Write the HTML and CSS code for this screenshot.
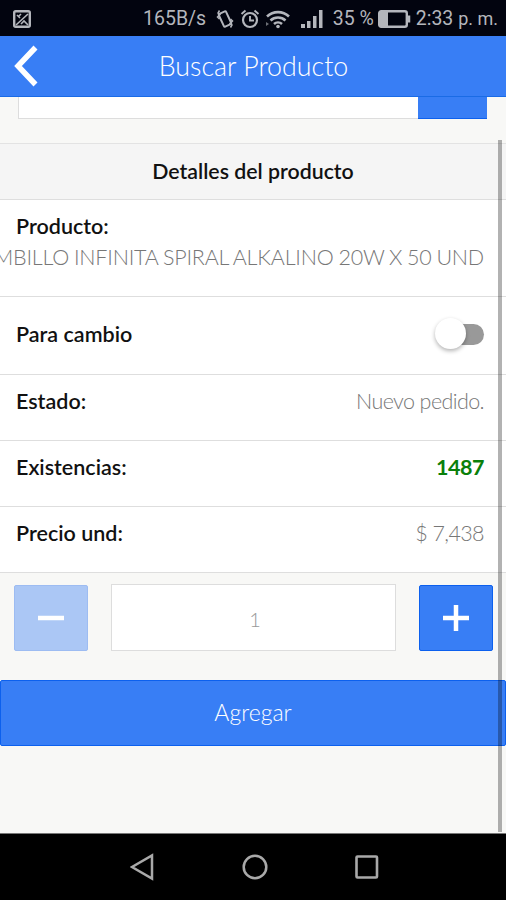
FILE: index.html
```
<!DOCTYPE html>
<html lang="es">

<head>
  <meta charset="UTF-8" />
  <meta name="viewport" content="width=device-width, initial-scale=1.0" />
  <title>Buscar Producto</title>
  <link rel="stylesheet" href="styles.css">
</head>

<body>
  <div class="app">

    <div class="status-bar">
      <svg class="status-image" width="18" height="18" viewBox="0 0 18 18" fill="none" stroke="#b4b6bc" stroke-width="2.400">
        <rect x="1.200" y="1.200" width="15.600" height="15.600" rx="1.500" />
        <path d="M3 15L15 4M8 14l3-3 4 4M4 5l3 3M8 4l-3 3" stroke-width="1.600" />
      </svg>
      <span class="speed">165B/s</span>
      <!-- vibración -->
      <svg class="status-mute" width="18" height="20" viewBox="0 0 18 20" fill="none" stroke="#b4b6bc" stroke-width="2">
        <rect x="5" y="3" width="8" height="14" rx="1" transform="rotate(-25 9 10)" />
        <path d="M3.500 1.500L2 4l2 1.500L1.500 8l2 2M14.500 10l2 2-2.500 2.500 2 1.500-1.500 2.500" stroke-width="1.500" />
      </svg>
      <!-- alarma -->
      <svg class="status-alarm" width="20" height="20" viewBox="0 0 20 20" fill="none" stroke="#b4b6bc" stroke-width="2.200">
        <circle cx="10" cy="11" r="7" />
        <path d="M10 7v4.500h4M1.500 5L5.500 1.500M18.500 5l-4-3.500" stroke-width="1.900" />
      </svg>
      <!-- wifi -->
      <svg class="status-wifi" width="26" height="20" viewBox="0 0 26 20" fill="none" stroke="#b4b6bc" stroke-width="2.600">
        <path d="M2 7.500a16 16 0 0 1 22 0M5.500 11.500a11 11 0 0 1 15 0M9 15a6 6 0 0 1 8 0" />
        <circle cx="13" cy="17.500" r="1.800" fill="#b4b6bc" stroke="none" />
        <path d="M1 13v4l3-2z" fill="#6d7077" stroke="none" />
      </svg>
      <svg class="status-signal" width="22" height="18" viewBox="0 0 22 18" fill="#b4b6bc">
        <path d="M0 14h4v4H0zM6 11h3.500v7H6zM12 6h3.500v12H12zM18 0h3.500v18H18z" />
      </svg>
      <span class="percent">35 %</span>
      <svg class="status-battery" width="33" height="18" viewBox="0 0 33 18" fill="none" stroke="#b4b6bc" stroke-width="2.400">
        <rect x="1.200" y="1.200" width="27.600" height="15.600" rx="2" />
        <path d="M1 1h9v16H1z" fill="#b4b6bc" stroke="none" />
        <path d="M31 5.500v7" stroke-width="2.500" />
      </svg>
      <span class="clock">2:33 <small>p. m.</small></span>
    </div>

    <header class="header">
      <button class="back" aria-label="Volver">
        <svg width="24" height="42" viewBox="0 0 24 42" fill="none" stroke="#fff" stroke-width="5.500">
          <path d="M21.500 2.500L4 21l17.500 18.500" />
        </svg>
      </button>
      <h1>Buscar Producto</h1>
    </header>

    <main class="content">
      <div class="search">
        <div class="search-input"></div>
        <div class="search-btn"></div>
      </div>

      <ul class="details">
        <li class="divider">Detalles del producto</li>
        <li class="item product">
          <b>Producto:</b>
          <span class="value">MBILLO INFINITA SPIRAL ALKALINO 20W X 50 UND</span>
        </li>
        <li class="item change">
          <b>Para cambio</b>
          <div class="toggle">
            <div class="toggle-handle"></div>
          </div>
        </li>
        <li class="item">
          <b>Estado:</b>
          <span class="value status">Nuevo pedido.</span>
        </li>
        <li class="item">
          <b>Existencias:</b>
          <span class="value stock">1487</span>
        </li>
        <li class="item">
          <b>Precio und:</b>
          <span class="value price">$ 7,438</span>
        </li>
      </ul>

      <div class="quantity">
        <button class="minus" aria-label="Restar">
          <svg width="26" height="26" viewBox="0 0 26 26" stroke="#fff" stroke-width="4.500">
            <path d="M0 13h26" />
          </svg>
        </button>
        <div class="amount">1</div>
        <button class="plus" aria-label="Sumar">
          <svg width="26" height="26" viewBox="0 0 26 26" stroke="#fff" stroke-width="4.500">
            <path d="M0 13h26M13 0v26" />
          </svg>
        </button>
      </div>

      <button class="add">Agregar</button>

      <div class="scrollbar"></div>
    </main>

    <nav class="nav-bar">
      <svg width="24" height="28" viewBox="0 0 24 28" fill="none" stroke="#a9a9a9" stroke-width="2.500">
        <path d="M22 2.500v23L2 14z" />
      </svg>
      <svg width="26" height="26" viewBox="0 0 26 26" fill="none" stroke="#a9a9a9" stroke-width="2.500">
        <circle cx="13" cy="13" r="11.300" />
      </svg>
      <svg width="24" height="24" viewBox="0 0 24 24" fill="none" stroke="#a9a9a9" stroke-width="2.600">
        <rect x="1.500" y="1.500" width="20.500" height="21" rx="1" />
      </svg>
    </nav>

  </div>
</body>

</html>
```

FILE: styles.css
```
* {
  box-sizing: border-box;
}

body {
  margin: 0;
  font-family: Lato, "Liberation Sans", sans-serif;
  font-size: 21.5px;
  color: #111;
}

button {
  appearance: none;
  border: none;
  padding: 0;
  font-family: inherit;
  cursor: pointer;
}

svg {
  display: block;
  flex: none;
}

.app {
  display: flex;
  flex-direction: column;
  width: 506px;
  height: 900px;
  overflow: hidden;
}

/* status bar */
.status-bar {
  display: flex;
  align-items: center;
  height: 36px;
  padding: 1px 8px 0 13px;
  background: #02040f;
  color: #b4b6bc;
  font-family: Roboto, sans-serif;
  font-size: 19.5px;
  white-space: nowrap;
}

.speed {
  width: 64px;
  margin-left: 112px;
}

.status-mute {
  margin-left: 9px;
}

.status-alarm {
  margin-left: 6px;
}

.status-wifi {
  margin-left: 5px;
}

.status-signal {
  margin-left: 10px;
}

.percent {
  width: 42px;
  margin-left: 10px;
}

.status-battery {
  margin-left: 3px;
}

.clock {
  margin-left: 5px;
}

.clock small {
  font-size: 18px;
}

/* header */
.header {
  display: grid;
  grid-template-columns: 54px 1fr 53px;
  align-items: center;
  height: 61px;
  background: #387ef5;
  border-bottom: 1px solid #1a6be6;
}

.header h1 {
  margin: 0;
  font-size: 26.8px;
  font-weight: 300;
  text-align: center;
  color: #fff;
}

.back {
  padding-left: 14px;
  background: none;
}

/* content */
.content {
  position: relative;
  flex: 1;
  background: #f8f8f6;
}

.search {
  display: flex;
  height: 22px;
  margin: 0 19px 0 18px;
}

.search-input {
  flex: 1;
  background: #fff;
  border: 1px solid #ddd;
  border-top: none;
  border-right: none;
}

.search-btn {
  width: 69px;
  background: #387ef5;
  border-bottom: 1px solid #0c60ee;
}

.details {
  margin: 24px 0 0;
  padding: 0;
  list-style: none;
}

.divider {
  height: 57px;
  border-top: 1px solid #e3e3e3;
  border-bottom: 1px solid #dedede;
  background: #f5f5f5;
  font-size: 21.3px;
  font-weight: 600;
  line-height: 55px;
  text-align: center;
}

.item {
  display: flex;
  justify-content: space-between;
  height: 66px;
  padding: 11px 22px 0 16px;
  border-bottom: 1px solid #dedede;
  background: #fff;
  line-height: 30px;
  white-space: nowrap;
}

.item b {
  font-weight: 600;
}

.product {
  flex-direction: column;
  justify-content: flex-start;
  height: 97px;
}

.product .value {
  align-self: flex-end;
  letter-spacing: -0.2px;
  line-height: 32px;
  word-spacing: -0.8px;
}

.change {
  height: 78px;
  padding-top: 22px;
}

.value {
  font-weight: 300;
  color: #777;
}

.status {
  letter-spacing: -0.6px;
}

.stock {
  letter-spacing: -0.5px;
  font-weight: 700;
  color: #0a800a;
}

.price {
  letter-spacing: -0.6px;
}

.toggle {
  width: 48px;
  height: 21px;
  margin-top: 5px;
  border-radius: 11px;
  background: #999;
}

.toggle-handle {
  width: 31px;
  height: 31px;
  margin: -6px 0 0 -1px;
  border-radius: 50%;
  background: #fff;
  box-shadow: 0 2px 4px rgba(0, 0, 0, 0.3);
}

.quantity {
  display: flex;
  align-items: center;
  padding: 11px 13px 0 14px;
}

.minus,
.plus {
  display: flex;
  align-items: center;
  justify-content: center;
  width: 74px;
  height: 66px;
  border: 1px solid #0c60ee;
  border-radius: 2px;
  background: #387ef5;
}

/* disabled while the amount is 1 */
.minus {
  border-color: #9dbcf2;
  background: #abc7f5;
}

.amount {
  flex: 1;
  height: 67px;
  margin: 0 23px;
  padding-left: 3px;
  border: 1px solid #ddd;
  background: #fff;
  color: #999;
  font-size: 20px;
  font-weight: 300;
  line-height: 68px;
  text-align: center;
}

.add {
  display: block;
  width: 100%;
  height: 66px;
  margin-top: 29px;
  padding-bottom: 3px;
  border: 1px solid #0c60ee;
  border-radius: 2px;
  background: #387ef5;
  color: #fff;
  font-size: 23px;
  font-weight: 300;
}

.scrollbar {
  position: absolute;
  top: 43px;
  right: 4px;
  bottom: 1px;
  width: 4px;
  background: rgba(0, 0, 0, 0.3);
}

/* navigation bar */
.nav-bar {
  display: flex;
  align-items: center;
  justify-content: space-between;
  height: 67px;
  padding: 0 127px 0 130px;
  border-top: 1px solid #777;
  background: #000;
}
```
